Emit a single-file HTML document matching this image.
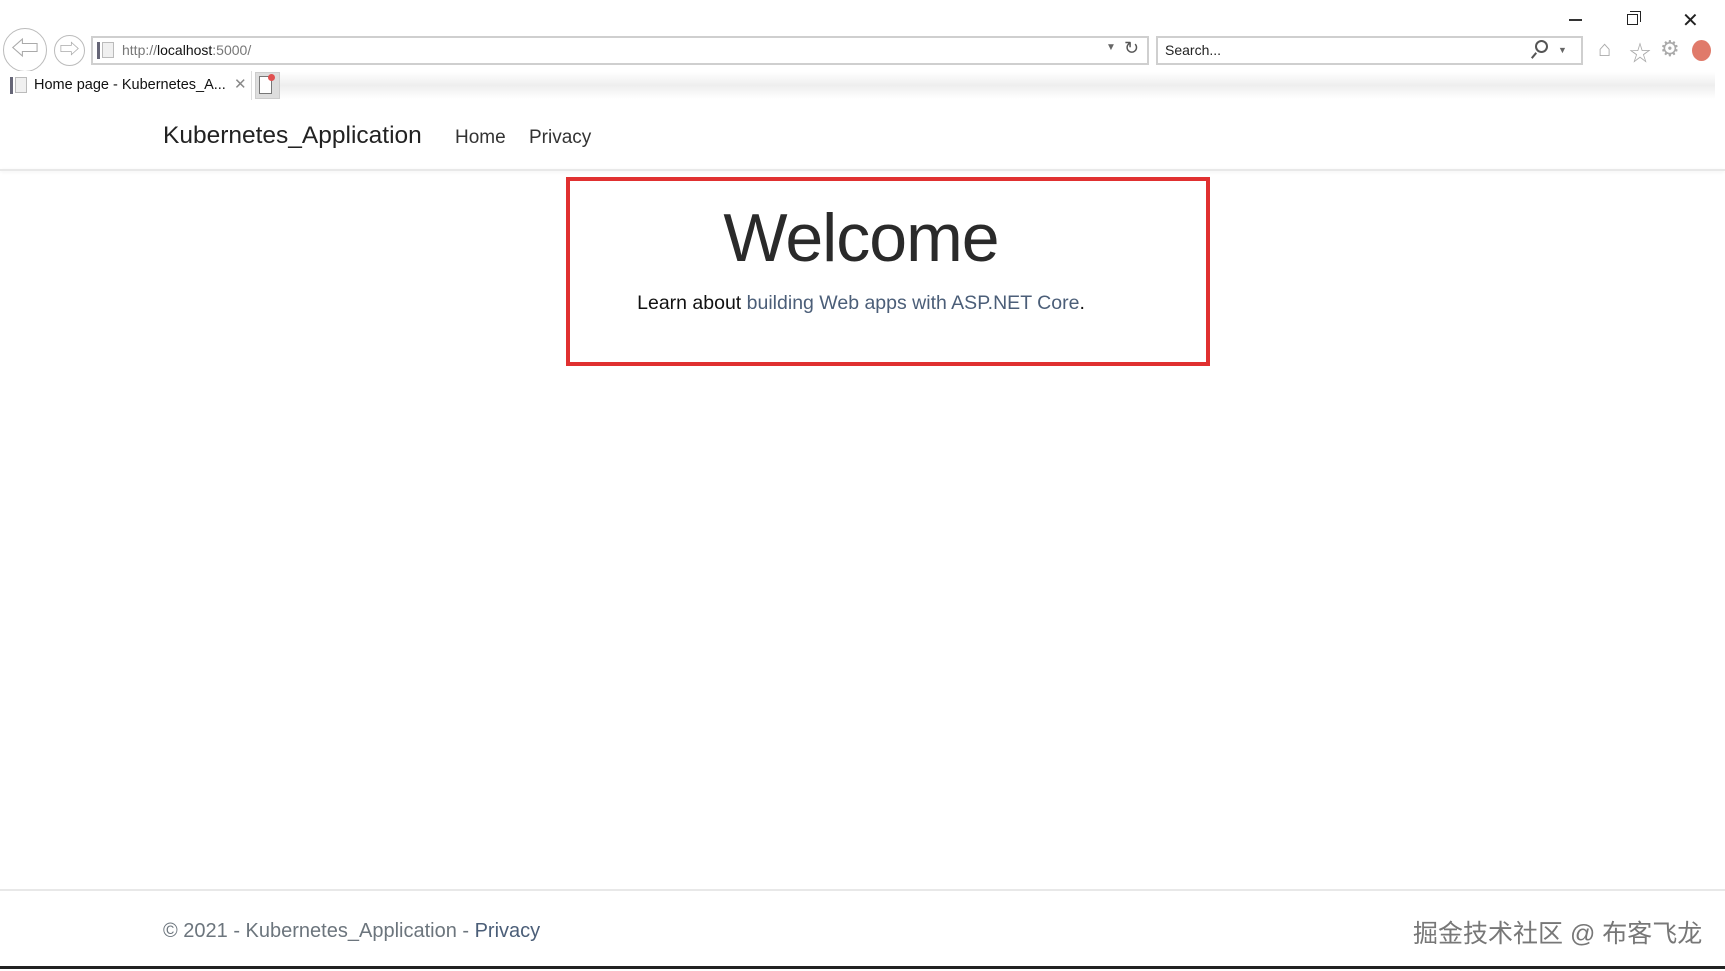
<!DOCTYPE html>
<html><head><meta charset="utf-8"><style>
*{margin:0;padding:0;box-sizing:border-box}
body{width:1725px;height:971px;background:#fff;position:relative;overflow:hidden;font-family:"Liberation Sans","Noto Sans CJK SC",sans-serif;color:#212529}
.a{position:absolute}
.bar{border:2px solid #cfcfcf;background:#fff;height:29px;top:36px}
</style></head><body>
<!-- window controls -->
<div class="a" style="left:1569px;top:19px;width:13px;height:1.5px;background:#333"></div>
<div class="a" style="left:1627px;top:14px;width:11px;height:11px;border:1.5px solid #222"></div>
<div class="a" style="left:1630px;top:11px;width:11px;height:11px;border-top:1.5px solid #222;border-right:1.5px solid #222"></div>
<div class="a" style="left:1682px;top:8px;font-size:20px;color:#222">✕</div>
<!-- back/forward -->
<div class="a" style="left:3px;top:28px;width:44px;height:44px;border:1.5px solid #bbb;border-radius:50%;color:#aaa;font-size:28px;line-height:40px;text-align:center">⇦</div>
<div class="a" style="left:54px;top:35px;width:31px;height:31px;border:1.5px solid #bbb;border-radius:50%;color:#aaa;font-size:20px;line-height:28px;text-align:center">⇨</div>
<div class="a bar" style="left:91px;width:1058px"></div>
<div class="a" style="left:97px;top:42px;width:3px;height:17px;background:#667"></div>
<div class="a" style="left:102px;top:42px;width:12px;height:16px;border:1px solid #bbb;background:#f0f0f0"></div>
<div class="a" style="left:122px;top:42px;font-size:14px;color:#777">http://<span style="color:#111">localhost</span>:5000/</div>
<div class="a" style="left:1106px;top:42px;font-size:10px;color:#666">▼</div>
<div class="a" style="left:1124px;top:38px;font-size:18px;color:#555">↻</div>
<div class="a bar" style="left:1156px;width:427px"></div>
<div class="a" style="left:1165px;top:42px;font-size:14px;color:#222">Search...</div>
<div class="a" style="left:1535px;top:40px;width:13px;height:13px;border:2px solid #555;border-radius:50%"></div>
<div class="a" style="left:1533px;top:52px;width:2px;height:7px;background:#555;transform:rotate(40deg)"></div>
<div class="a" style="left:1558px;top:45px;font-size:9px;color:#666">▼</div>
<div class="a" style="left:1598px;top:36px;font-size:22px;color:#aaa">⌂</div>
<div class="a" style="left:1629px;top:36px;font-size:22px;color:#aaa">☆</div>
<div class="a" style="left:1660px;top:36px;font-size:22px;color:#aaa">⚙</div>
<div class="a" style="left:1692px;top:40px;width:19px;height:21px;border-radius:50%;background:#e07a6a"></div>
<!-- tab row -->
<div class="a" style="left:255px;top:72px;width:1460px;height:27px;background:linear-gradient(#fff,#eee 50%,#fff)"></div>
<div class="a" style="left:0;top:71px;width:252px;height:29px;background:#fff;border-right:1px solid #ddd"></div>
<div class="a" style="left:10px;top:77px;width:3px;height:17px;background:#667"></div>
<div class="a" style="left:15px;top:77px;width:12px;height:16px;border:1px solid #bbb;background:#f0f0f0"></div>
<div class="a" style="left:34px;top:77px;font-size:14.5px;color:#111">Home page - Kubernetes_A...</div>
<div class="a" style="left:234px;top:75px;font-size:15px;color:#888">✕</div>
<div class="a" style="left:255px;top:72px;width:25px;height:27px;background:#ddd;border:1px solid #ccc"></div>
<div class="a" style="left:259px;top:76px;width:13px;height:18px;border:1px solid #777;background:#fff"></div>
<div class="a" style="left:268px;top:74px;width:7px;height:7px;border-radius:50%;background:#e05050"></div>
<!-- navbar -->
<div class="a" style="left:163px;top:122px;font-size:24.5px;color:#222">Kubernetes_Application</div>
<div class="a" style="left:455px;top:127px;font-size:19px;color:#333">Home</div>
<div class="a" style="left:529px;top:127px;font-size:19px;color:#333">Privacy</div>
<div class="a" style="left:0;top:169px;width:1725px;height:2px;background:#e8e8e8;box-shadow:0 1px 3px rgba(0,0,0,.06)"></div>
<!-- red box -->
<div class="a" style="left:566px;top:177px;width:644px;height:189px;border:4px solid #e03030"></div>
<div class="a" style="left:661px;top:198px;width:400px;text-align:center;font-size:68px;font-weight:300;letter-spacing:-1px;color:#2a2a2a;line-height:80px">Welcome</div>
<div class="a" style="left:511px;top:292px;width:700px;text-align:center;font-size:19.5px;color:#111">Learn about <span style="color:#4b5e78">building Web apps with ASP.NET Core</span>.</div>
<!-- footer -->
<div class="a" style="left:0;top:889px;width:1725px;height:2px;background:#e8e8e8"></div>
<div class="a" style="left:163px;top:920px;font-size:20px;color:#6c757d">© 2021 - Kubernetes_Application - <span style="color:#4b5e78">Privacy</span></div>
<div class="a" style="left:1413px;top:914px;font-size:25px;color:#777;letter-spacing:0">掘金技术社区 @ 布客飞龙</div>
<div class="a" style="left:0;top:966px;width:1725px;height:3px;background:#222"></div>
</body></html>
